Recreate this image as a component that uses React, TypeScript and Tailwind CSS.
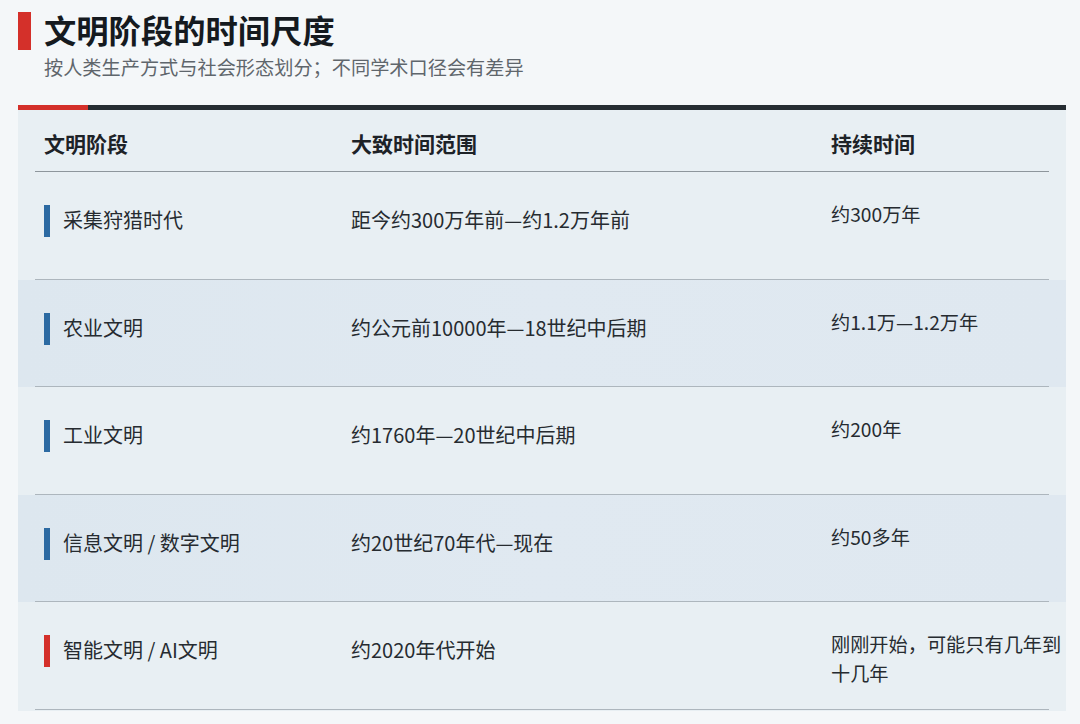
import React from "react";

const rows = [
  { name: "采集狩猎时代", range: "距今约300万年前—约1.2万年前", dur: "约300万年", alt: false, red: false },
  { name: "农业文明", range: "约公元前10000年—18世纪中后期", dur: "约1.1万—1.2万年", alt: true, red: false },
  { name: "工业文明", range: "约1760年—20世纪中后期", dur: "约200年", alt: false, red: false },
  { name: "信息文明 / 数字文明", range: "约20世纪70年代—现在", dur: "约50多年", alt: true, red: false },
  { name: "智能文明 / AI文明", range: "约2020年代开始", dur: "刚刚开始，可能只有几年到十几年", alt: false, red: true },
];

export default function App() {
  return (
    <div
      className="w-[1080px] h-[724px] bg-[#f4f7f9] pl-[18px] pr-[14px] text-[#222] overflow-hidden"
      style={{ fontFamily: '"Noto Sans CJK SC", "Noto Sans", sans-serif' }}
    >
      <div className="flex pt-[12px]">
        <div className="w-[13px] h-[38px] bg-[#d4302a] shrink-0" />
        <div className="ml-[13px] -mt-[7px]">
          <div className="text-[32.3px] leading-[48px] font-bold text-[#151a1f]">文明阶段的时间尺度</div>
          <div className="text-[19.2px] leading-[26px] text-[#5f666c] mt-[1px]">按人类生产方式与社会形态划分；不同学术口径会有差异</div>
        </div>
      </div>

      <div className="mt-[25px] flex h-[5px]">
        <div className="w-[70px] bg-[#d4302a]" />
        <div className="flex-1 bg-[#262d33]" />
      </div>

      <div className="bg-[#e8eff3] h-[601px]">
        <div className="mx-[17px] h-[62px] border-b border-[#8e969c] grid grid-cols-[316px_480px_232px] items-center pt-[7px] text-[21px] font-bold text-[#1d2227]">
          <div className="pl-[9px]">文明阶段</div>
          <div>大致时间范围</div>
          <div>持续时间</div>
        </div>
        {rows.map((r, i) => (
          <div key={i} className={r.alt ? "bg-gradient-to-r from-[#dde7ef] via-[#e0e9f1] to-[#dfe8f0]" : ""}>
            <div className="mx-[17px] h-[107.6px] border-b border-[#adb6bd] grid grid-cols-[316px_480px_232px] items-start text-[20px] leading-[29px] text-[#262b30]">
              <div className="pl-[9px] pt-[33px] flex items-center">
                <div className={`w-[6px] h-[32px] ${r.red ? "bg-[#d4302a]" : "bg-[#2c6aa2]"}`} />
                <div className="ml-[13px] -mt-[3px]">{r.name}</div>
              </div>
              <div className="pt-[33px]">{r.range}</div>
              <div className="pt-[28px] text-[19.2px]">{r.dur}</div>
            </div>
          </div>
        ))}
      </div>
    </div>
  );
}
